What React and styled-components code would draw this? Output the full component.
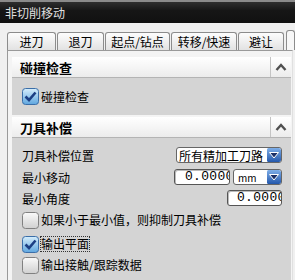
import React from "react";
import styled, { createGlobalStyle } from "styled-components";

const GlobalStyle = createGlobalStyle`
  html, body {
    margin: 0;
    padding: 0;
    background: #f0f0f0;
  }
  body {
    font-family: "Noto Sans CJK SC", "Liberation Sans", sans-serif;
    font-size: 12px;
    color: #000;
    overflow: hidden;
  }
`;

const Frame = styled.div`
  width: 295px;
  height: 280px;
  overflow: hidden;
  background: #f0f0f0;
  display: flex;
  flex-direction: column;
`;

const TitleBar = styled.div`
  height: 21px;
  flex: none;
  border-top: 2px solid #8a8a8a;
  background: linear-gradient(#2e2e2e, #161616 40%, #111);
  color: #e0e0e0;
  font-size: 12px;
  display: flex;
  align-items: center;
  padding-left: 5px;
`;

const TabRow = styled.div`
  margin-top: 8px;
  height: 19px;
  flex: none;
  display: flex;
  align-items: flex-end;
  gap: 1px;
  padding-left: 7px;
`;

const Tab = styled.div`
  width: ${(p) => p.$w}px;
  height: ${(p) => (p.$active ? 20 : 18)}px;
  flex: ${(p) => (p.$active ? 1 : "none")};
  margin-left: ${(p) => (p.$active ? 1 : 0)}px;
  box-sizing: border-box;
  border: 1px solid #8c8c8c;
  border-bottom: none;
  border-radius: 3px 3px 0 0;
  background: ${(p) =>
    p.$active ? "#f7f7f7" : "linear-gradient(#fdfdfd, #e2e2e2)"};
  display: flex;
  align-items: center;
  justify-content: center;
  font-size: 12px;
  line-height: 1;
`;

const Panel = styled.div`
  flex: 1;
  margin-left: 7px;
  margin-right: 2px;
  border-left: 1px solid #9a9a9a;
  border-top: 1px solid #9a9a9a;
  border-right: 1px solid #e0e0e0;
  background: #f4f4f4;
  padding: 6px 1px 0 4px;
`;

const SectionHeader = styled.div`
  height: 20px;
  margin-top: ${(p) => p.$gap || 0}px;
  display: flex;
  align-items: stretch;
  background: linear-gradient(#ffffff, #ececec);
  border-bottom: 1px solid #b4b4b4;
`;

const HeaderTitle = styled.div`
  flex: 1;
  display: flex;
  align-items: center;
  padding-left: 8px;
  font-size: 13px;
  font-weight: 700;
`;

const Collapse = styled.div`
  width: 20px;
  border-left: 1px solid #c4c4c4;
  display: flex;
  align-items: center;
  justify-content: center;
`;

const SectionBody = styled.div`
  background: #d4d4d4;
  padding: ${(p) => p.$pad};
  display: flex;
  flex-direction: column;
`;

const Row = styled.div`
  height: ${(p) => p.$h}px;
  display: flex;
  align-items: center;
  justify-content: space-between;
`;

const Label = styled.span`
  font-size: 12px;
  white-space: nowrap;
`;

const Controls = styled.div`
  display: flex;
  gap: 3px;
`;

const Select = styled.div`
  width: ${(p) => p.$w}px;
  height: 16px;
  box-sizing: border-box;
  border: 1px solid #666;
  border-radius: 3px;
  background: #fff;
  display: flex;
  align-items: center;
  overflow: hidden;
`;

const SelectText = styled.span`
  flex: 1;
  padding-left: ${(p) => (p.$small ? 4 : 2)}px;
  font-size: ${(p) => (p.$small ? 10 : 12)}px;
  white-space: nowrap;
  overflow: hidden;
`;

const NumberBox = styled.div`
  width: ${(p) => p.$w}px;
  height: 16px;
  box-sizing: border-box;
  border: 1px solid #555;
  border-radius: 3px;
  background: #fff;
  box-shadow: inset 1px 1px 0 #bbb;
  overflow: hidden;
  white-space: nowrap;
  padding-left: ${(p) => p.$pad}px;
  font-family: "Liberation Mono", monospace;
  font-size: 13px;
  letter-spacing: 0.3px;
  line-height: 14px;
`;

const CheckRow = styled.label`
  height: ${(p) => p.$h}px;
  display: flex;
  align-items: center;
  gap: 2px;
  font-size: 12px;
`;

const CheckText = styled.span`
  outline: ${(p) => (p.$focus ? "1px dotted #333" : "none")};
  line-height: 14px;
`;

const Chevron = () => (
  <svg width="12" height="8" viewBox="0 0 12 8">
    <path d="M1.5 7 L6 2 L10.5 7" fill="none" stroke="#505050" strokeWidth="2.4" />
  </svg>
);

const DropButton = () => (
  <svg width="14" height="14" viewBox="0 0 14 14" style={{ flex: "none" }}>
    <defs>
      <linearGradient id="db" x1="0" y1="0" x2="0" y2="1">
        <stop offset="0" stopColor="#7eaee8" />
        <stop offset="1" stopColor="#2458ac" />
      </linearGradient>
    </defs>
    <rect x="0" y="0" width="14" height="14" rx="1.5" fill="url(#db)" />
    <path d="M2.5 4.5 L11.5 4.5 L7 10 Z" fill="#1b2f66" stroke="#fff" strokeWidth="1" />
  </svg>
);

const CheckBox = ({ checked }) => (
  <svg width="17" height="17" viewBox="0 0 17 17" style={{ flex: "none" }}>
    <defs>
      <linearGradient id="cbOff" x1="0" y1="0" x2="0" y2="1">
        <stop offset="0" stopColor="#fafafa" />
        <stop offset="1" stopColor="#d0d0d0" />
      </linearGradient>
      <linearGradient id="cbOn" x1="0" y1="0" x2="0" y2="1">
        <stop offset="0" stopColor="#d6eefc" />
        <stop offset="1" stopColor="#5fa6df" />
      </linearGradient>
    </defs>
    <rect
      x="0.5"
      y="0.5"
      width="16"
      height="16"
      rx="3"
      fill={checked ? "url(#cbOn)" : "url(#cbOff)"}
      stroke={checked ? "#3b6ea8" : "#808080"}
    />
    {checked && (
      <path d="M3.5 8.5 L7 12 L13.5 4.5" fill="none" stroke="#1c3f84" strokeWidth="2.6" />
    )}
  </svg>
);

export default function App() {
  return (
    <Frame>
      <GlobalStyle />
      <TitleBar>非切削移动</TitleBar>
      <TabRow>
        <Tab $w={49}>进刀</Tab>
        <Tab $w={47}>退刀</Tab>
        <Tab $w={65}>起点/钻点</Tab>
        <Tab $w={66}>转移/快速</Tab>
        <Tab $w={46}>避让</Tab>
        <Tab $active />
      </TabRow>
      <Panel>
        <SectionHeader>
          <HeaderTitle>碰撞检查</HeaderTitle>
          <Collapse>
            <Chevron />
          </Collapse>
        </SectionHeader>
        <SectionBody $pad="10px 10px 10px 10px">
          <CheckRow $h={17}>
            <CheckBox checked />
            <CheckText>碰撞检查</CheckText>
          </CheckRow>
        </SectionBody>
        <SectionHeader $gap={2}>
          <HeaderTitle>刀具补偿</HeaderTitle>
          <Collapse>
            <Chevron />
          </Collapse>
        </SectionHeader>
        <SectionBody $pad="6px 9px 10px 10px">
          <Row $h={22}>
            <Label>刀具补偿位置</Label>
            <Select $w={106}>
              <SelectText>所有精加工刀路</SelectText>
              <DropButton />
            </Select>
          </Row>
          <Row $h={22}>
            <Label>最小移动</Label>
            <Controls>
              <NumberBox $w={56} $pad={10}>0.0000</NumberBox>
              <Select $w={49}>
                <SelectText $small>mm</SelectText>
                <DropButton />
              </Select>
            </Controls>
          </Row>
          <Row $h={20}>
            <Label>最小角度</Label>
            <NumberBox $w={55} $pad={9}>0.0000</NumberBox>
          </Row>
          <CheckRow $h={24}>
            <CheckBox />
            <CheckText>如果小于最小值，则抑制刀具补偿</CheckText>
          </CheckRow>
          <CheckRow $h={24}>
            <CheckBox checked />
            <CheckText $focus>输出平面</CheckText>
          </CheckRow>
          <CheckRow $h={18}>
            <CheckBox />
            <CheckText>输出接触/跟踪数据</CheckText>
          </CheckRow>
        </SectionBody>
      </Panel>
    </Frame>
  );
}
